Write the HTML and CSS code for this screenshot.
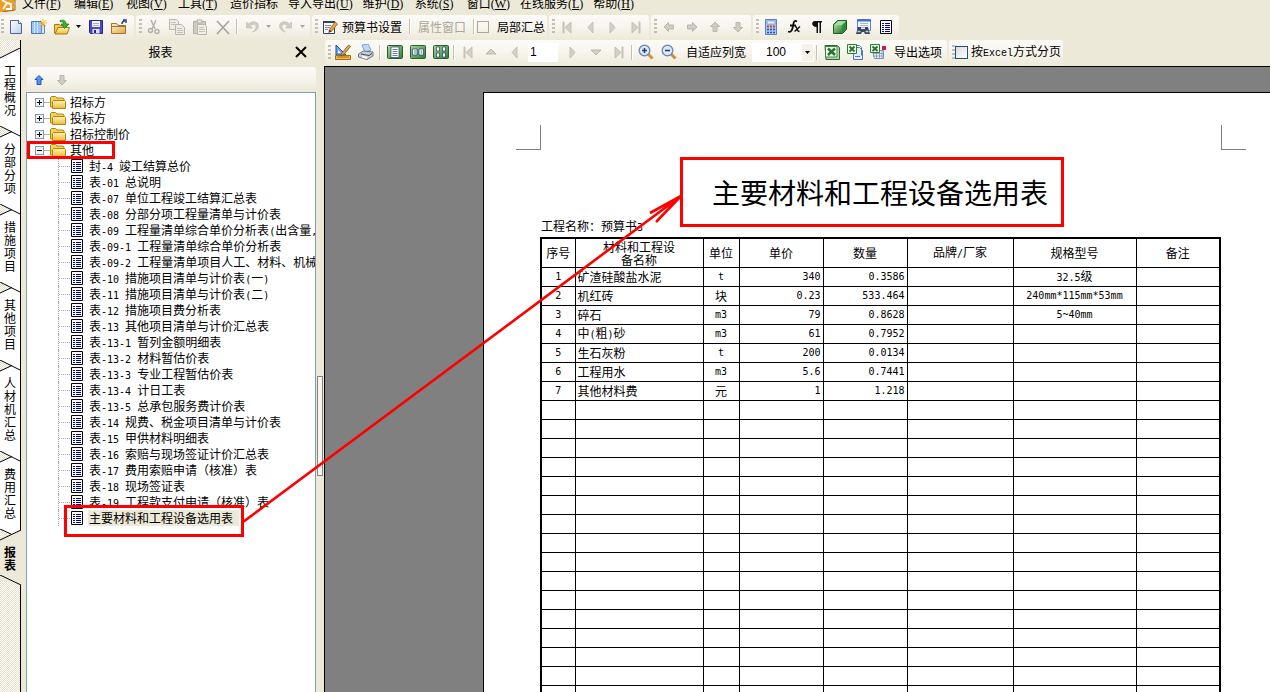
FILE: index.html
```html
<!DOCTYPE html>
<html lang="zh-CN">
<head>
<meta charset="utf-8">
<title>报表</title>
<link rel="stylesheet" href="styles.css">
</head>
<body>
<svg class="defs" aria-hidden="true">
  <defs>
    <linearGradient id="gBlue" x1="0" y1="0" x2="1" y2="1"><stop offset="0" stop-color="#fff"/><stop offset="1" stop-color="#b9cdee"/></linearGradient>
    <linearGradient id="gGold" x1="0" y1="0" x2="0" y2="1"><stop offset="0" stop-color="#fff3b0"/><stop offset="1" stop-color="#f0b93a"/></linearGradient>
    <linearGradient id="gTan" x1="0" y1="0" x2="1" y2="1"><stop offset="0" stop-color="#fff0c0"/><stop offset="1" stop-color="#dfa850"/></linearGradient>
    <linearGradient id="gGreen" x1="0" y1="0" x2="1" y2="1"><stop offset="0" stop-color="#a9d69a"/><stop offset="1" stop-color="#2f7a35"/></linearGradient>
    <pattern id="hatch" width="2" height="2" patternUnits="userSpaceOnUse"><rect width="2" height="2" fill="#fff"/><path d="M0 0h1v1H0zM1 1h1v1H1z" fill="#e4dfc8"/></pattern>
    <symbol id="report" viewBox="0 0 12 14"><path d="M.5.5h11v13H.5z" fill="#fff" stroke="#000"/><path d="M2 3.500h2m1 0h5M2 5.500h2m1 0h5M2 7.500h2m1 0h5M2 9.500h2m1 0h5M2 11.500h2m1 0h5" stroke="#00009c"/></symbol>
    <symbol id="folder" viewBox="0 0 16 14"><path d="M.5 12V2.500l1-1h4l1.500 1.500h6l1 1V12z" fill="#f6d25a" stroke="#b08410"/><path d="M2.500 13.500v-7l1-1h11l1 1v7z" fill="url(#gGold)" stroke="#b08410"/></symbol>
    <symbol id="plus" viewBox="0 0 9 9"><rect x=".5" y=".5" width="8" height="8" fill="#f3f2ec" stroke="#7b9ab8"/><path d="M2 4.500h5M4.500 2v5" stroke="#000"/></symbol>
    <symbol id="minus" viewBox="0 0 9 9"><rect x=".5" y=".5" width="8" height="8" fill="#f3f2ec" stroke="#7b9ab8"/><path d="M2 4.500h5" stroke="#000"/></symbol>
    <symbol id="caret" viewBox="0 0 5 3"><path d="M0 0h5L2.500 3z" fill="currentColor"/></symbol>
    <symbol id="tri" viewBox="0 0 16 16"><path d="M11 3v11L6 8.500z" fill="#d3d1c6" stroke="#c2c0b5"/></symbol>
    <symbol id="triEnd" viewBox="0 0 16 16"><path d="M12 3v11L6 8.500zM4 3h1v11H4z" fill="#d3d1c6" stroke="#c2c0b5"/></symbol>
    <symbol id="arrow" viewBox="0 0 12 12"><path d="M6 1l4.500 4.500H8v5H4v-5H1.500z" fill="#d0cec3" stroke="#b9b7ac"/></symbol>
    <symbol id="undo" viewBox="0 0 16 16"><path d="M2.500 3v6h6L6.500 7c2-2.500 5-2.500 5.500 0 .4 2-.8 4-3.500 6 4-.8 6.300-3.500 6-6.500C14 2.500 8 1.500 4.500 5z" fill="#cfcdc2" stroke="#bdbbb0" stroke-width=".6"/></symbol>
    <symbol id="lens" viewBox="0 0 16 16"><path d="M10 10l4.500 4.500" stroke="#d4922c" stroke-width="3"/><circle cx="6.500" cy="6.500" r="5.300" fill="#dbeafc" stroke="#7388b5" stroke-width="1.400"/></symbol>
    <symbol id="excel" viewBox="0 0 16 16"><path d="M1 1.500h12l2.500 2v12H2z" fill="#b5d3a8" stroke="#2b6b2d"/><path d="M1.500 2.500h11.500v10.500H1.500z" fill="#f4faf1" stroke="#3a8b40"/><path d="M4 4.500l7 6.500M11 4.500L4 11" stroke="#1f7427" stroke-width="2.400"/></symbol>
  </defs>
</svg>

<div class="app">
  <nav class="menubar" aria-label="菜单">
    <svg class="app-logo" viewBox="0 0 16 12"><path d="M0 0h14v10L0 12z" fill="#ef9c22"/><path d="M2 0l5 3-4 6M7 3l4 1v5H6" fill="none" stroke="#fff" stroke-width="2"/><path d="M14 0h1v10L2 12" fill="none" stroke="#a4601a"/></svg>
    <button>文件(<u>F</u>)</button><button>编辑(<u>E</u>)</button><button>视图(<u>V</u>)</button><button>工具(<u>T</u>)</button><button>造价指标</button><button>导入导出(<u>U</u>)</button><button>维护(<u>D</u>)</button><button>系统(<u>S</u>)</button><button>窗口(<u>W</u>)</button><button>在线服务(<u>L</u>)</button><button>帮助(<u>H</u>)</button>
  </nav>

  <div class="toolrow">
    <div class="group first">
      <span class="grip"></span>
      <button class="tb" aria-label="新建"><svg viewBox="0 0 16 16"><path d="M2.500 1.500h8l3 3v10h-11z" fill="url(#gBlue)" stroke="#4a659b"/><path d="M10.500 1.500v3h3" fill="#fff" stroke="#4a659b"/></svg></button>
      <button class="tb" aria-label="新建表"><svg viewBox="0 0 16 16"><path d="M.5 2.500h10v12H.5z" fill="#8fc0ee" stroke="#4878b4"/><path d="M3.500 3v11M6.500 3v11" stroke="#e4f2ff"/><path d="M1 5.500h9M1 8.500h9M1 11.500h9" stroke="#a9d0f4"/><path d="M10.500 5.500h3v9h-3z" fill="#d7e6f6" stroke="#6d8cb5"/><path d="M12 0v8M8 4h8M9 1l6 6M15 1L9 7" stroke="#f8c22c"/></svg></button>
      <button class="tb" aria-label="打开"><svg viewBox="0 0 16 16"><path d="M.5 14V5.500h5l1 1h6V14z" fill="#f3c84d" stroke="#a87812"/><path d="M1 15l3-6.500h11.500L13 15z" fill="url(#gGold)" stroke="#a87812"/><path d="M6 1.500c4-1 6 .5 6 3.500h3l-4.500 4.500L7 5h2.500C9.500 3 8 2.500 6 2.500z" fill="#34b52c" stroke="#13701a" stroke-width=".7"/></svg></button>
      <button class="tb drop" aria-label="打开列表"><svg><use href="#caret"/></svg></button>
      <button class="tb" aria-label="保存"><svg viewBox="0 0 16 16"><path d="M1.500 1.500h13v13h-12l-1-1z" fill="#4a4ac4" stroke="#25258a"/><path d="M4 2h8v6H4z" fill="#f4f5fa"/><path d="M5 4.500h6M5 6.500h6" stroke="#a9adc8"/><path d="M4.500 10h7v4.500h-7z" fill="#dfe1ee"/><path d="M6 11h2v3H6z" fill="#25258a"/></svg></button>
      <button class="tb" aria-label="关闭工程"><svg viewBox="0 0 16 16"><path d="M.5 4.500h5l1.500 2h7.500v8H.5z" fill="url(#gTan)" stroke="#a4712c"/><path d="M1 7.500h13" stroke="#a4712c"/><path d="M11 5c0-2 1-3 3-3m-2-1h3v3" fill="none" stroke="#2b477e" stroke-width="1.500"/></svg></button>
    </div>
    <div class="group">
      <span class="grip"></span>
      <button class="tb" aria-label="剪切"><svg viewBox="0 0 16 16"><path d="M5 1l4 9M10 1L6 10" stroke="#b3b1a7" stroke-width="1.500"/><circle cx="4.500" cy="11.500" r="2" fill="none" stroke="#b3b1a7" stroke-width="1.500"/><circle cx="11" cy="12.500" r="2" fill="none" stroke="#b3b1a7" stroke-width="1.500"/></svg></button>
      <button class="tb" aria-label="复制"><svg viewBox="0 0 16 16"><path d="M.5.5h7l2 2v8h-9z" fill="#eeece4" stroke="#b9b7ac"/><path d="M6.500 5.500h6l3 3v7h-9z" fill="#eeece4" stroke="#b9b7ac"/><path d="M2 3.500h5M2 5.500h4M8 9.500h5M8 11.500h6M8 13.500h6" stroke="#c4c2b7"/></svg></button>
      <button class="tb" aria-label="粘贴"><svg viewBox="0 0 16 16"><path d="M1.500 2.500h12v12h-12z" fill="#cfcdc3" stroke="#b0aea4"/><path d="M5 1h5v3H5z" fill="#e9e7de" stroke="#b0aea4"/><path d="M5.500 5.500h7l2 2v8h-9z" fill="#f1efe8" stroke="#b9b7ac"/><path d="M7 8.500h5M7 10.500h6M7 12.500h6" stroke="#c4c2b7"/></svg></button>
      <button class="tb" aria-label="删除"><svg viewBox="0 0 16 16"><path d="M2 2l12 13M14 2L2 15" stroke="#aaa89e" stroke-width="1.800"/></svg></button>
      <span class="sep"></span>
      <button class="tb" aria-label="撤销"><svg><use href="#undo"/></svg></button>
      <button class="tb drop off" aria-label="撤销列表"><svg><use href="#caret"/></svg></button>
      <button class="tb" aria-label="重做"><svg class="flip"><use href="#undo"/></svg></button>
      <button class="tb drop off" aria-label="重做列表"><svg><use href="#caret"/></svg></button>
    </div>
    <div class="group">
      <span class="grip"></span>
      <button class="tb" aria-label="设置"><svg viewBox="0 0 16 16"><path d="M1.500 2.500h11v12h-11z" fill="#f6f8fc" stroke="#34445f"/><path d="M1 3h12" stroke="#34445f" stroke-width="2"/><path d="M3 6.500h6M3 8.500h5M3 10.500h3" stroke="#7e8cab"/><path d="M7 11l6-8 2.500 2-6 7.500z" fill="#f0a63b" stroke="#805010" stroke-width=".7"/><path d="M7 11l-.5 3 3-1.500z" fill="#333"/></svg></button>
      <button class="label">预算书设置</button>
      <span class="sep wide"></span>
      <button class="label" disabled>属性窗口</button>
      <span class="sep near"></span>
      <label class="check small"><input type="checkbox"><span>局部汇总</span></label>
    </div>
    <div class="group">
      <span class="grip"></span>
      <button class="tb" aria-label="首条"><svg><use href="#triEnd"/></svg></button>
      <button class="tb" aria-label="上一条"><svg><use href="#tri"/></svg></button>
      <button class="tb" aria-label="下一条"><svg class="flip"><use href="#tri"/></svg></button>
      <button class="tb" aria-label="末条"><svg class="flip"><use href="#triEnd"/></svg></button>
    </div>
    <div class="group">
      <span class="grip"></span>
      <button class="tb mini" aria-label="左移"><svg class="left"><use href="#arrow"/></svg></button>
      <button class="tb mini" aria-label="右移"><svg class="right"><use href="#arrow"/></svg></button>
      <button class="tb mini" aria-label="上移"><svg><use href="#arrow"/></svg></button>
      <button class="tb mini" aria-label="下移"><svg class="down"><use href="#arrow"/></svg></button>
    </div>
    <div class="group">
      <span class="grip"></span>
      <button class="tb" aria-label="计算器"><svg viewBox="0 0 16 16"><path d="M2.500.5h11v15h-11z" fill="#a9c6f0" stroke="#5b83bf"/><path d="M4 2h8v3H4z" fill="#eaf3ff" stroke="#5b83bf" stroke-width=".6"/><path d="M4 7.500h2m1 0h2m1 0h2" stroke="#d34242" stroke-width="2"/><path d="M4 10.500h2m1 0h2m1 0h2M4 13.500h2m1 0h2m1 0h2" stroke="#2b56a8" stroke-width="1.600"/></svg></button>
      <button class="tb" aria-label="函数"><svg viewBox="0 0 16 16"><path d="M11 2.500C8 .5 7.500 4 7 7s-1.500 7-5 5.500M4 6.500h6" fill="none" stroke="#111" stroke-width="1.800"/><path d="M9 7.500c3 0 1 5 4.500 5M14 7.500L8.500 12.500" fill="none" stroke="#111" stroke-width="1.400"/></svg></button>
      <button class="tb" aria-label="段落"><svg viewBox="0 0 16 16"><path d="M4 2h9v1.500h-1V14h-1.500V3.500H9V14H7.500V8C2 8 2 2 6 2z" fill="#111"/></svg></button>
      <button class="tb" aria-label="图库"><svg viewBox="0 0 16 16"><path d="M1.500 5.500l4-4h9v9l-4 4h-9z" fill="#2f8a3b" stroke="#1c5d27"/><path d="M2 6l4-4h8l-4 4z" fill="#a5dfa0"/><path d="M2 6h8v8H2z" fill="url(#gGreen)"/></svg></button>
      <button class="tb" aria-label="查找"><svg viewBox="0 0 16 16"><path d="M2.500.5h13v11h-13z" fill="#f3f7ff" stroke="#5a80c9"/><path d="M2 1.500h14" stroke="#3c6bce" stroke-width="2"/><path d="M5 4.500h8M5 6.500h8M5 8.500h8" stroke="#a5b6d9"/><path d="M3 8h3v2h4V8h3l2 7h-5l-1-2H7l-1 2H1z" fill="#39485e"/><path d="M2.500 12.500h3M10.500 12.500h3" stroke="#b9c9df" stroke-width="1.500"/></svg></button>
      <button class="tb" aria-label="报表"><svg class="sheet"><use href="#report"/></svg></button>
    </div>
  </div>

  <div class="work">
    <nav class="tabs" aria-label="页签">
      <button><svg class="notch"><path d="M0 0h20L0 10z" fill="url(#hatch)"/><path d="M0 10L20 0" stroke="#000"/></svg><span>工程概况</span></button>
      <button><svg class="notch"><path d="M0 0l12 5.500L0 11z" fill="url(#hatch)"/><path d="M0 0l20 10M0 11l12-5.500" stroke="#000"/></svg><span>分部分项</span></button>
      <button><svg class="notch"><path d="M0 0l12 5.500L0 11z" fill="url(#hatch)"/><path d="M0 0l20 10M0 11l12-5.500" stroke="#000"/></svg><span>措施项目</span></button>
      <button><svg class="notch"><path d="M0 0l12 5.500L0 11z" fill="url(#hatch)"/><path d="M0 0l20 10M0 11l12-5.500" stroke="#000"/></svg><span>其他项目</span></button>
      <button><svg class="notch"><path d="M0 0l12 5.500L0 11z" fill="url(#hatch)"/><path d="M0 0l20 10M0 11l12-5.500" stroke="#000"/></svg><span>人材机汇总</span></button>
      <button><svg class="notch"><path d="M0 0l12 5.500L0 11z" fill="url(#hatch)"/><path d="M0 0l20 10M0 11l12-5.500" stroke="#000"/></svg><span>费用汇总</span></button>
      <button class="active"><svg class="notch"><path d="M0 11L20 1h2v11H0z" fill="#ece9d8"/><path d="M0 0l10 5L0 10z" fill="url(#hatch)"/><path d="M0 0l11 5M0 11L21 1" stroke="#000"/></svg><span>报表</span><svg class="notch foot"><path d="M0 0h22v10h-2z" fill="#ece9d8"/><path d="M0 0l21 10" stroke="#000"/></svg></button>
    </nav>

    <aside class="side">
      <header class="caption"><h2>报表</h2><button aria-label="关闭"><svg viewBox="0 0 12 12"><path d="M1 1l10 10M11 1L1 11" stroke="#000" stroke-width="2"/></svg></button></header>
      <div class="minibar">
        <button class="tb mini" aria-label="上移"><svg viewBox="0 0 12 12"><path d="M6 1.500l4 4H8v5H4v-5H2z" fill="#5b93f0" stroke="#1f55b5"/></svg></button>
        <button class="tb mini" aria-label="下移"><svg class="down"><use href="#arrow"/></svg></button>
      </div>
      <ul class="tree">
        <li><div class="node"><button class="exp" aria-label="展开"><svg><use href="#plus"/></svg></button><svg class="fold"><use href="#folder"/></svg><span>招标方</span></div></li>
        <li><div class="node"><button class="exp" aria-label="展开"><svg><use href="#plus"/></svg></button><svg class="fold"><use href="#folder"/></svg><span>投标方</span></div></li>
        <li><div class="node"><button class="exp" aria-label="展开"><svg><use href="#plus"/></svg></button><svg class="fold"><use href="#folder"/></svg><span>招标控制价</span></div></li>
        <li><div class="node"><button class="exp" aria-label="折叠"><svg><use href="#minus"/></svg></button><svg class="fold"><use href="#folder"/></svg><span>其他</span></div>
          <ul class="leaves">
            <li><svg><use href="#report"/></svg><button>封<span class="en">-4 </span>竣工结算总价</button></li>
            <li><svg><use href="#report"/></svg><button>表<span class="en">-01 </span>总说明</button></li>
            <li><svg><use href="#report"/></svg><button>表<span class="en">-07 </span>单位工程竣工结算汇总表</button></li>
            <li><svg><use href="#report"/></svg><button>表<span class="en">-08 </span>分部分项工程量清单与计价表</button></li>
            <li><svg><use href="#report"/></svg><button>表<span class="en">-09 </span>工程量清单综合单价分析表<span class="en">(</span>出含量<span class="en">,</span></button></li>
            <li><svg><use href="#report"/></svg><button>表<span class="en">-09-1 </span>工程量清单综合单价分析表</button></li>
            <li><svg><use href="#report"/></svg><button>表<span class="en">-09-2 </span>工程量清单项目人工、材料、机械</button></li>
            <li><svg><use href="#report"/></svg><button>表<span class="en">-10 </span>措施项目清单与计价表<span class="en">(</span>一<span class="en">)</span></button></li>
            <li><svg><use href="#report"/></svg><button>表<span class="en">-11 </span>措施项目清单与计价表<span class="en">(</span>二<span class="en">)</span></button></li>
            <li><svg><use href="#report"/></svg><button>表<span class="en">-12 </span>措施项目费分析表</button></li>
            <li><svg><use href="#report"/></svg><button>表<span class="en">-13 </span>其他项目清单与计价汇总表</button></li>
            <li><svg><use href="#report"/></svg><button>表<span class="en">-13-1 </span>暂列金额明细表</button></li>
            <li><svg><use href="#report"/></svg><button>表<span class="en">-13-2 </span>材料暂估价表</button></li>
            <li><svg><use href="#report"/></svg><button>表<span class="en">-13-3 </span>专业工程暂估价表</button></li>
            <li><svg><use href="#report"/></svg><button>表<span class="en">-13-4 </span>计日工表</button></li>
            <li><svg><use href="#report"/></svg><button>表<span class="en">-13-5 </span>总承包服务费计价表</button></li>
            <li><svg><use href="#report"/></svg><button>表<span class="en">-14 </span>规费、税金项目清单与计价表</button></li>
            <li><svg><use href="#report"/></svg><button>表<span class="en">-15 </span>甲供材料明细表</button></li>
            <li><svg><use href="#report"/></svg><button>表<span class="en">-16 </span>索赔与现场签证计价汇总表</button></li>
            <li><svg><use href="#report"/></svg><button>表<span class="en">-17 </span>费用索赔申请（核准）表</button></li>
            <li><svg><use href="#report"/></svg><button>表<span class="en">-18 </span>现场签证表</button></li>
            <li><svg><use href="#report"/></svg><button>表<span class="en">-19 </span>工程款支付申请（核准）表</button></li>
            <li><svg><use href="#report"/></svg><button class="selected">主要材料和工程设备选用表</button></li>
          </ul>
        </li>
      </ul>
    </aside>

    <div class="splitter"><span></span></div>

    <main class="preview">
      <div class="toolrow">
        <div class="group">
          <span class="grip"></span>
          <button class="tb" aria-label="设计"><svg viewBox="0 0 16 16"><path d="M1 1v10h10z" fill="#6ba4f0" stroke="#1f4ea8"/><path d="M3 6v3h3z" fill="#fff"/><path d="M.5 11.500h15v4H.5z" fill="#f5bd42" stroke="#a46e10"/><path d="M3 12v2m2-2v2m2-2v2m2-2v2m2-2v2m2-2v2" stroke="#7b4e08" stroke-width=".7"/><path d="M7 9l6.500-8 2 1.500L9 10.500 6 12z" fill="#e9a144" stroke="#704818" stroke-width=".7"/></svg></button>
          <button class="tb" aria-label="打印"><svg viewBox="0 0 16 16"><path d="M4 1l6-1 3 6-6 2z" fill="#bcd9fb" stroke="#7ba2d4"/><path d="M.5 10l5-3 9.500 1v4l-6 3.500L.5 13z" fill="#c9cdd5" stroke="#6d727e"/><path d="M3 10l8 1.500 3-2" fill="none" stroke="#40454f"/><path d="M4 12.500l5 1.500" stroke="#fff" stroke-width="2"/></svg></button>
          <span class="sep mid"></span>
          <button class="tb" aria-label="单页"><svg viewBox="0 0 16 16"><rect x=".5" y="1.500" width="15" height="13" rx="1" fill="url(#gGreen)" stroke="#23632b"/><path d="M4 3h8v10.500H4z" fill="#fff" stroke="#22406a" stroke-width=".7"/><path d="M5.500 5.500h5m-5 2h5m-5 2h5m-5 2h5" stroke="#5d7cab"/></svg></button>
          <button class="tb" aria-label="双页"><svg viewBox="0 0 16 16"><rect x=".5" y="1.500" width="15" height="13" rx="1" fill="url(#gGreen)" stroke="#23632b"/><path d="M2.500 5h4.500v6H2.500zM9 5h4.500v6H9z" fill="#fff" stroke="#22406a" stroke-width=".7"/><path d="M4 7h2M4 9h2m4.500-2h2m-2 2h2" stroke="#5d7cab"/></svg></button>
          <button class="tb" aria-label="多页"><svg viewBox="0 0 16 16"><rect x=".5" y="1.500" width="15" height="13" rx="1" fill="url(#gGreen)" stroke="#23632b"/><path d="M3.500 3h3v4h-3zM9.500 3h3v4h-3zM3.500 9h3v4h-3zM9.500 9h3v4h-3z" fill="#fff" stroke="#22406a" stroke-width=".7"/></svg></button>
          <span class="sep"></span>
          <button class="tb" aria-label="首页"><svg><use href="#triEnd"/></svg></button>
          <button class="tb" aria-label="上移页"><svg viewBox="0 0 16 16"><path d="M8 5l5 5H3z" fill="#d3d1c6" stroke="#bab8ad"/></svg></button>
          <button class="tb" aria-label="上一页"><svg><use href="#tri"/></svg></button>
          <input class="pageno" type="text" value="1" aria-label="页码">
          <button class="tb" aria-label="下一页"><svg class="flip"><use href="#tri"/></svg></button>
          <button class="tb" aria-label="下移页"><svg viewBox="0 0 16 16"><path d="M8 11L3 6h10z" fill="#d3d1c6" stroke="#bab8ad"/></svg></button>
          <button class="tb" aria-label="末页"><svg class="flip"><use href="#triEnd"/></svg></button>
          <span class="sep"></span>
          <button class="tb" aria-label="放大"><svg viewBox="0 0 16 16"><use href="#lens"/><path d="M4 6.500h5M6.500 4v5" stroke="#26406f" stroke-width="1.600"/></svg></button>
          <button class="tb" aria-label="缩小"><svg viewBox="0 0 16 16"><use href="#lens"/><path d="M4 6.500h5" stroke="#26406f" stroke-width="1.600"/></svg></button>
          <button class="label fit">自适应列宽</button>
          <span class="zoom"><select aria-label="缩放"><option>100</option></select><svg><use href="#caret"/></svg></span>
          <span class="sep mid"></span>
          <button class="tb" aria-label="导出"><svg viewBox="0 0 16 16"><use href="#excel"/></svg></button>
          <button class="tb" aria-label="导出多表"><svg viewBox="0 0 16 16"><path d="M6.500 3.500h6l3 3v9h-9z" fill="#e3edfb" stroke="#5578ae"/><path d="M9.500 1.500h3l2 2v8" fill="none" stroke="#5578ae"/><path d="M8 12.500h5" stroke="#5578ae"/><path d="M.5.5h9v9h-9z" fill="#eef7ea" stroke="#2b7d32"/><path d="M2.500 2.500l5 5M7.500 2.500l-5 5" stroke="#1f7427" stroke-width="1.800"/></svg></button>
          <button class="tb" aria-label="导出表格"><svg viewBox="0 0 16 16"><path d="M2.500 6.500h11v8h-9z" fill="#edf3fb" stroke="#7d92b6"/><path d="M3 9.500h11M3 12h11M6.500 7v8M9.500 7v8M12 7v8" stroke="#7d92b6" stroke-width=".8"/><path d="M.5.5h9v8h-9z" fill="#eef7ea" stroke="#2b7d32"/><path d="M2.500 2.500l5 4.500M7.500 2.500l-5 4.500" stroke="#1f7427" stroke-width="1.800"/><path d="M12 2h4v4h-4z" fill="#c41c64"/></svg></button>
          <button class="label export">导出选项</button>
        </div>
        <div class="group">
          <span class="grip"></span>
          <label class="check"><input type="checkbox"><span>按<span class="slab">Excel</span>方式分页</span></label>
        </div>
      </div>

      <div class="canvas">
        <article class="page">
          <div class="crops"><i class="crop-l"></i><i class="crop-r"></i></div>
          <h1>主要材料和工程设备选用表</h1>
          <p class="project">工程名称：预算书<span class="en">3</span></p>
          <table>
            <colgroup><col class="c-no"><col class="c-name"><col class="c-unit"><col class="c-num"><col class="c-num"><col class="c-brand"><col class="c-spec"><col></colgroup>
            <thead><tr><th>序号</th><th>材料和工程设<br>备名称</th><th>单位</th><th>单价</th><th>数量</th><th>品牌<span class="en">/</span>厂家</th><th>规格型号</th><th>备注</th></tr></thead>
            <tbody>
              <tr><td class="en">1</td><td>矿渣硅酸盐水泥</td><td class="en">t</td><td class="en">340</td><td class="en">0.3586</td><td></td><td><span class="en">32.5</span>级</td><td></td></tr>
              <tr><td class="en">2</td><td>机红砖</td><td>块</td><td class="en">0.23</td><td class="en">533.464</td><td></td><td class="en">240mm*115mm*53mm</td><td></td></tr>
              <tr><td class="en">3</td><td>碎石</td><td class="en">m3</td><td class="en">79</td><td class="en">0.8628</td><td></td><td class="en">5~40mm</td><td></td></tr>
              <tr><td class="en">4</td><td>中<span class="en">(</span>粗<span class="en">)</span>砂</td><td class="en">m3</td><td class="en">61</td><td class="en">0.7952</td><td></td><td></td><td></td></tr>
              <tr><td class="en">5</td><td>生石灰粉</td><td class="en">t</td><td class="en">200</td><td class="en">0.0134</td><td></td><td></td><td></td></tr>
              <tr><td class="en">6</td><td>工程用水</td><td class="en">m3</td><td class="en">5.6</td><td class="en">0.7441</td><td></td><td></td><td></td></tr>
              <tr><td class="en">7</td><td>其他材料费</td><td>元</td><td class="en">1</td><td class="en">1.218</td><td></td><td></td><td></td></tr>
              <tr><td></td><td></td><td></td><td></td><td></td><td></td><td></td><td></td></tr>
              <tr><td></td><td></td><td></td><td></td><td></td><td></td><td></td><td></td></tr>
              <tr><td></td><td></td><td></td><td></td><td></td><td></td><td></td><td></td></tr>
              <tr><td></td><td></td><td></td><td></td><td></td><td></td><td></td><td></td></tr>
              <tr><td></td><td></td><td></td><td></td><td></td><td></td><td></td><td></td></tr>
              <tr><td></td><td></td><td></td><td></td><td></td><td></td><td></td><td></td></tr>
              <tr><td></td><td></td><td></td><td></td><td></td><td></td><td></td><td></td></tr>
              <tr><td></td><td></td><td></td><td></td><td></td><td></td><td></td><td></td></tr>
              <tr><td></td><td></td><td></td><td></td><td></td><td></td><td></td><td></td></tr>
              <tr><td></td><td></td><td></td><td></td><td></td><td></td><td></td><td></td></tr>
              <tr><td></td><td></td><td></td><td></td><td></td><td></td><td></td><td></td></tr>
              <tr><td></td><td></td><td></td><td></td><td></td><td></td><td></td><td></td></tr>
              <tr><td></td><td></td><td></td><td></td><td></td><td></td><td></td><td></td></tr>
              <tr><td></td><td></td><td></td><td></td><td></td><td></td><td></td><td></td></tr>
              <tr><td></td><td></td><td></td><td></td><td></td><td></td><td></td><td></td></tr>
              <tr><td></td><td></td><td></td><td></td><td></td><td></td><td></td><td></td></tr>
            </tbody>
          </table>
        </article>
      </div>
    </main>
  </div>

  <svg class="marks" aria-hidden="true">
    <g fill="none" stroke="#f00" stroke-width="3">
      <rect x="28.500" y="142.500" width="85" height="15"/>
      <rect x="65.500" y="506.500" width="177" height="29"/>
      <rect x="681.500" y="158.500" width="381" height="67"/>
      <path d="M243 522L681 196M650 213L681 196L656 222" stroke-width="2.600"/>
    </g>
  </svg>
</div>
</body>
</html>
```

FILE: styles.css
```css
* { box-sizing: border-box; }
body {
  margin: 0;
  background: #ece9d8;
  color: #000;
  font: 12px/16px "Noto Sans CJK SC", sans-serif;
}
button, input, select {
  margin: 0;
  padding: 0;
  border: 0;
  background: none;
  color: inherit;
  font: inherit;
}
h1, h2, p, ul { margin: 0; padding: 0; font-weight: normal; }
ul { list-style: none; }
svg { display: block; flex: none; }
.defs { position: absolute; width: 0; height: 0; }
.en { font-family: "DejaVu Sans Mono", monospace; font-size: 10px; white-space: pre; }
.slab { font-family: "Liberation Mono", monospace; font-size: 10px; }

.app {
  position: relative;
  display: flex;
  flex-direction: column;
  height: 100vh;
  overflow: hidden;
}

/* menu */
.menubar {
  display: flex;
  flex: none;
  gap: 10px;
  height: 15px;
  font-family: "Liberation Serif", "Noto Sans CJK SC", serif;
  line-height: 9px;
}
.menubar button { min-width: 42px; height: 9px; text-align: left; white-space: nowrap; }
.app-logo { width: 16px; height: 12px; margin-right: -4px; }

/* toolbars */
.toolrow { display: flex; flex: none; gap: 2px; height: 25px; }
.group {
  display: flex;
  align-items: center;
  padding: 0 2px 2px 0;
  border-radius: 3px;
  background: linear-gradient(#fcfbf8, #f6f4ec 50%, #ece9d8);
}
.grip {
  width: 3px;
  height: 15px;
  margin-left: 3px;
  background: repeating-linear-gradient(#c2bfb2 0 2px, transparent 2px 4px);
}
.first { padding-right: 4px; }
.first .grip { margin-left: 1px; }
.tb {
  display: flex;
  align-items: center;
  justify-content: center;
  width: 23px;
  height: 23px;
}
.tb svg { width: 16px; height: 16px; }
.tb.mini svg { width: 12px; height: 12px; }
.tb.drop { width: 11px; }
.tb.drop svg { width: 5px; height: 3px; }
.tb.off { color: #aaa89e; }
.tb svg.sheet { width: 12px; height: 14px; }
.flip { transform: scaleX(-1); }
.left { transform: rotate(-90deg); }
.right { transform: rotate(90deg); }
.down { transform: rotate(180deg); }
.sep { width: 2px; height: 15px; margin: 0 2px; border-left: 1px solid #c5c2b2; background: #fff; }
.sep.wide { margin: 0 6px; }
.sep.near { margin: 0 2px 0 6px; }
.preview .sep { margin: 0 1px; }
.preview .sep.mid { margin: 0 2px; }
.label { margin: 0 1px; white-space: nowrap; }
.label:disabled { color: #aca899; }
.fit { margin: 0 6px; }
.export { margin: 0 3px 0 5px; }
.check { display: flex; align-items: center; gap: 3px; white-space: nowrap; }
.check input {
  appearance: none;
  width: 13px;
  height: 13px;
  margin: 0;
  border: 1px solid #1c5180;
  background: linear-gradient(135deg, #dcdcd7, #fff);
}
.check.small { gap: 8px; }
.check.small input { width: 12px; height: 12px; border-color: #aca899; background: none; }
.pageno { width: 30px; height: 19px; margin: 0 3px; padding: 0 2px; background: #fff; font-family: "Liberation Sans", sans-serif; }
.zoom { position: relative; width: 62px; height: 19px; background: #fff; }
.zoom select { appearance: none; width: 100%; height: 100%; padding-left: 14px; font-family: "Liberation Sans", sans-serif; }
.zoom svg {
  position: absolute;
  top: 1px;
  right: 1px;
  width: 11px;
  height: 17px;
  padding: 7px 3px;
  background: #f3f1e8;
  pointer-events: none;
}

/* work area */
.work { display: flex; flex: 1; min-height: 0; }
.tabs {
  display: flex;
  flex: none;
  flex-direction: column;
  width: 21px;
  padding-top: 12px;
  border-right: 1px solid #000;
  background: repeating-conic-gradient(#e4dfc8 0 25%, #fff 0 50%) 0 0 / 2px 2px;
}
.tabs button {
  position: relative;
  width: 20px;
  padding: 12px 4px 14px;
  background: #fff;
  line-height: 13px;
}
.tabs span { display: block; width: 12px; word-break: break-all; }
.tabs .active { width: 22px; padding-bottom: 10px; background: #ece9d8; font-weight: bold; }
.notch { position: absolute; top: -4px; left: 0; width: 22px; height: 12px; overflow: hidden; }
.notch.foot { top: auto; bottom: -6px; }

.side { display: flex; flex: none; flex-direction: column; width: 295px; padding-left: 5px; }
.caption { display: flex; align-items: center; height: 27px; padding: 0 9px 3px 0; }
.caption h2 { flex: 1; text-align: center; font-size: 12px; }
.caption svg { width: 12px; height: 12px; }
.minibar {
  display: flex;
  align-items: center;
  height: 25px;
  margin-left: 1px;
  border-radius: 3px;
  background: linear-gradient(#fcfbf8, #f6f4ec 50%, #ece9d8);
}
.tree {
  flex: 1;
  min-height: 0;
  padding: 1px 0 0 8px;
  border: 1px solid #7f9db9;
  border-bottom: 0;
  background: #fff;
  overflow: hidden;
  white-space: nowrap;
}
.node { display: flex; align-items: center; height: 16px; background: linear-gradient(90deg, #b5b29c, #b5b29c) no-repeat 9px 8px / 6px 1px; }
.exp { margin-right: 6px; }
.exp svg { width: 9px; height: 9px; }
.fold { width: 16px; height: 14px; margin-right: 4px; }
.leaves { margin-left: 23px; }
.leaves li { display: flex; align-items: center; height: 16px; border-left: 1px dotted #aca899; }
.leaves li::before { content: ""; flex: none; width: 11px; border-top: 1px dotted #aca899; }
.leaves svg { width: 12px; height: 14px; margin: 0 5px 0 1px; }
.leaves button { flex: none; height: 16px; padding: 0 1px; }
.leaves .selected { padding-right: 6px; background: #ece9d8; }

.splitter { display: flex; flex: none; align-items: center; width: 8px; padding: 120px 0 0 1px; }
.splitter span { width: 6px; height: 100px; border: 1px solid #85837a; background: #f6f5ef; }

.preview { display: flex; flex: 1; flex-direction: column; min-width: 0; }
.preview .toolrow { height: 26px; padding-left: 1px; white-space: nowrap; }
.canvas {
  flex: 1;
  min-height: 0;
  padding: 25px 0 0 158px;
  border: solid #000;
  border-width: 1px 0 0 1px;
  background: #808080;
  overflow: hidden;
}
.page {
  padding: 32px 24px 0 32px;
  border: solid #000;
  border-width: 1px 0 0 1px;
  background: #fff;
}
.crops { display: flex; justify-content: space-between; }
.crops i { width: 25px; height: 25px; border: 0 solid #808080; border-bottom-width: 1px; }
.crops .crop-l { border-right-width: 1px; }
.crops .crop-r { border-left-width: 1px; }
.page h1 { padding: 23px 2px 9px 0; text-align: center; font-size: 28px; line-height: 38px; }
.project { margin: 0 0 3px 25px; line-height: 12px; }
.page table {
  width: calc(100% - 49px);
  margin: 0 25px 0 24px;
  border: 2px solid #000;
  border-collapse: collapse;
  table-layout: fixed;
}
.c-no { width: 34px; }
.c-name { width: 128px; }
.c-unit { width: 36px; }
.c-num { width: 84px; }
.c-brand { width: 106px; }
.c-spec { width: 123px; }
.page th, .page td { height: 19px; padding: 0 2px; border: 1px solid #000; text-align: center; line-height: 12px; font-weight: normal; }
.page th { height: 29px; line-height: 13px; }
.page td:nth-child(2) { text-align: left; }
.page td:nth-child(4), .page td:nth-child(5) { text-align: right; }

.marks { position: absolute; top: 0; left: 0; width: 100%; height: 100%; pointer-events: none; }
```
